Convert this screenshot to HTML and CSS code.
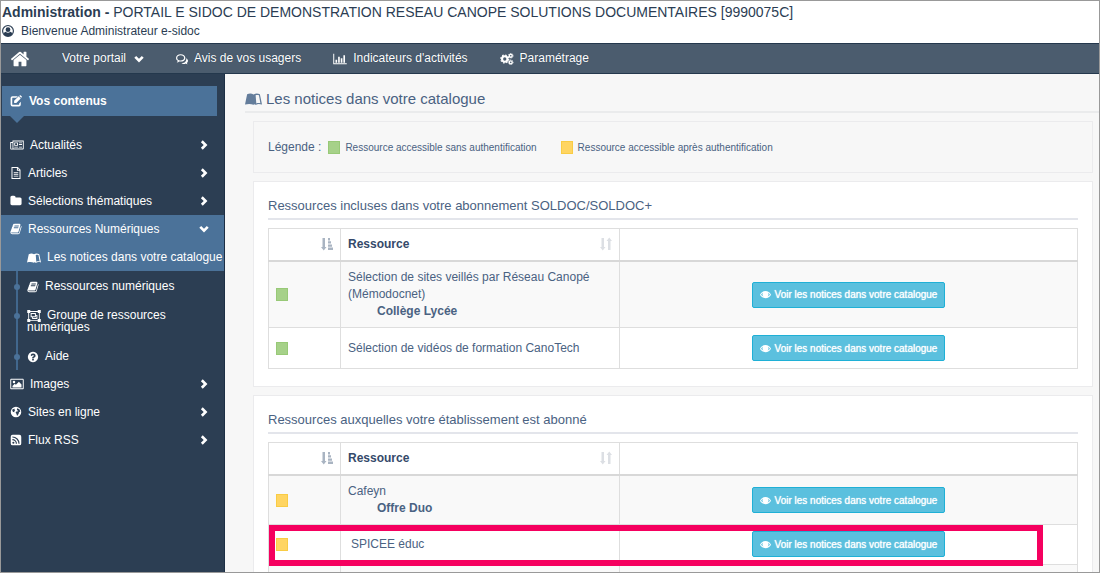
FILE: index.html
```html
<!DOCTYPE html>
<html lang="fr">

<head>
  <meta charset="UTF-8">
  <title>Administration - e-sidoc</title>
  <link rel="stylesheet" href="styles.css">
</head>

<body>
  <!-- icônes -->
  <svg class="sprite" aria-hidden="true">
    <symbol id="i-user" viewBox="0 0 16 16"><path fill-rule="evenodd" d="M8 0a8 8 0 1 0 0 16A8 8 0 0 0 8 0zm0 1.500a6.500 6.500 0 0 1 5.500 10c-.4-1.500-1.300-2.500-2.500-2.500a4 4 0 0 1-6 0c-1.200 0-2.100 1-2.500 2.500A6.500 6.500 0 0 1 8 1.500zM8 3a3.200 3.200 0 1 0 0 6.400A3.200 3.200 0 0 0 8 3z"/></symbol>
    <symbol id="i-home" viewBox="0 0 1792 1792"><path d="M1472 992v480q0 26-19 45t-45 19h-384v-384h-256v384h-384q-26 0-45-19t-19-45v-480q0-1 .5-3t.5-3l575-474 575 474q1 2 1 6zm223-69l-62 74q-8 9-21 11h-3q-13 0-21-7l-692-577-692 577q-12 8-24 7-13-2-21-11l-62-74q-8-10-7-23.500t11-21.500l719-599q32-26 76-26t76 26l244 204v-195q0-14 9-23t23-9h192q14 0 23 9t9 23v408l219 182q10 8 11 21.500t-7 23.500z"/></symbol>
    <symbol id="i-chevron" viewBox="0 0 16 16"><path d="M3.500 3L8 7.500 12.500 3 15.500 6 8 13.500.5 6z"/></symbol>
    <symbol id="i-comments" viewBox="0 0 16 16"><path d="M10.500 14.800c-1.300 0-2.300-.3-3.300-.9 4.600-.2 7.200-3.200 6.300-6.800C15 8 16 9.300 16 10.500c0 1.100-.6 2-1.500 2.700.2.800.6 1.200 1.100 1.700-1.200 0-2-.4-2.700-.9-.7.500-1.500.8-2.400.8z"/><path fill-rule="evenodd" d="M6.200 1.500C2.800 1.500 0 3.700 0 6.500c0 1.600.9 3 2.300 3.900-.2.900-.6 1.500-1.300 2.200 1.400-.1 2.500-.6 3.300-1.300 4.500.8 8.200-1.500 8.200-4.800 0-2.800-2.800-5-6.300-5zm0 1.600c2.600 0 4.600 1.500 4.600 3.400S8.800 9.900 6.200 9.900c-.8 0-1.500-.1-2.100-.3C2.700 9 1.600 7.900 1.600 6.500c0-1.900 2-3.400 4.600-3.400z"/></symbol>
    <symbol id="i-chart" viewBox="0 0 18 16"><path d="M0 1h1.300v12.700H18V15H0zM3 9h2.200v4H3zM6.500 5h2.200v8H6.500zM10 7h2.200v6H10zM13.500 3h2.200v10h-2.200z"/></symbol>
    <symbol id="i-cogs" viewBox="0 0 18 16"><g fill="none" stroke="currentColor"><circle cx="6" cy="8" r="3.600" stroke-width="2.800"/><circle cx="6" cy="8" r="5.300" stroke-width="1.600" stroke-dasharray="2.080 2.080"/><circle cx="14" cy="3.600" r="2" stroke-width="1.800"/><circle cx="14" cy="3.600" r="3.200" stroke-width="1" stroke-dasharray="1.250 1.250"/><circle cx="14" cy="12.400" r="2" stroke-width="1.800"/><circle cx="14" cy="12.400" r="3.200" stroke-width="1" stroke-dasharray="1.250 1.250"/></g></symbol>
    <symbol id="i-edit" viewBox="0 0 16 16"><path d="M10.500 1.500H3.300A2.500 2.500 0 0 0 .8 4v8.800a2.500 2.500 0 0 0 2.500 2.500h8.600a2.500 2.500 0 0 0 2.500-2.500V9l-2.200 2.200v1.300a.6.6 0 0 1-.6.6H3.600a.6.6 0 0 1-.6-.6V4.300c0-.3.3-.6.600-.6h4.700z"/><path d="M5.500 7.800L11.500 1.800l2.800 2.800-6 6H5.500zM12.300 1.200l.7-.7c.4-.4 1-.4 1.300 0l1.300 1.300c.4.4.4 1 0 1.300l-.7.700z"/></symbol>
    <symbol id="i-news" viewBox="0 0 18 16"><path fill-rule="evenodd" d="M3 2h15v10.500c0 1-.7 1.500-1.500 1.500h-15C.6 14 0 13.400 0 12.500V4h3zm1.200 1.200v9.600h12.600V3.200zM1.200 5.200v7.300c0 .7 1.800.7 1.800 0V5.200zM5.300 4.500h5v4.500h-5zm1.200 1.200v2.200h2.600V5.700zM11.500 4.500h4.200v1.200h-4.200zm0 2.200h4.200v1.200h-4.200zm-6.200 3.500h5v1.200h-5zm6.200 0h4.200v1.200h-4.200z"/></symbol>
    <symbol id="i-file" viewBox="0 0 16 16"><path fill-rule="evenodd" d="M2 0h8.500L14 3.500V16H2zm1.300 1.300v13.400h9.400V5H9.200V1.300zm7.200.3v2.100h2zM5 6.500h6v1.200H5zm0 2.500h6v1.200H5zm0 2.500h6v1.200H5z"/></symbol>
    <symbol id="i-folder" viewBox="0 0 1792 1792"><path d="M1728 608v704q0 92-66 158t-158 66h-1216q-92 0-158-66t-66-158v-960q0-92 66-158t158-66h320q92 0 158 66t66 158v32h672q92 0 158 66t66 158z"/></symbol>
    <symbol id="i-book" viewBox="0 0 1792 1792"><path d="M1703 478q40 57 18 129l-275 906q-19 64-76.500 107.500t-122.500 43.500h-923q-77 0-148.500-53.500t-99.500-131.500q-24-67-2-127 0-4 3-27t4-37q1-8-3-21.500t-3-19.500q2-11 8-21t16.500-23.500 16.500-23.500q23-38 45-91.500t30-91.500q3-10 .5-30t-.5-28q3-11 17-28t17-23q21-36 42-92t25-90q1-9-2.500-32t.5-28q4-13 22-30.500t22-22.500q19-26 42.500-84.500t27.500-96.500q1-8-3-25.500t-2-26.500q2-8 9-18t18-23 17-21q8-12 16.500-30.500t15-35 16-36 19.500-32 26.500-23.500 36-11.500 47.500 5.500l-1 3q38-9 51-9h761q74 0 114 56t18 130l-274 906q-36 119-71.500 153.500t-128.500 34.500h-869q-27 0-38 15-11 16-1 43 24 70 144 70h923q29 0 56-15.500t35-41.500l300-987q7-22 5-57 38 15 59 43zm-1064 2q-4 13 2 22.500t20 9.500h608q13 0 25.500-9.500t16.500-22.500l21-64q4-13-2-22.500t-20-9.500h-608q-13 0-25.500 9.500t-16.500 22.500zm-83 256q-4 13 2 22.500t20 9.500h608q13 0 25.500-9.500t16.500-22.500l21-64q4-13-2-22.500t-20-9.500h-608q-13 0-25.500 9.500t-16.500 22.500z"/></symbol>
    <symbol id="i-leanpub" viewBox="0 0 20 14"><path fill-rule="evenodd" d="M2.500 1.500C5 .3 8 .3 10 1.800c2-1.500 5-1.500 7.500-.3L20 13.500c-3-.9-5-1-7 .3h-.6c-1-.9-1.500-1-2.400 0-2.800-1.200-6.500-1.300-10-.3zM12.500 2.600l.8 9.600c1.500-.6 3-.7 4.800-.3l-1.700-9.200c-1.500-.6-2.800-.5-3.900-.1z"/></symbol>
    <symbol id="i-group" viewBox="0 0 18 16"><path fill-rule="evenodd" d="M0 0h4v1.300h10V0h4v4h-1.300v8H18v4h-4v-1.300H4V16H0v-4h1.300V4H0zm4 2.500V4H2.500v8H4v1.500h10V12h1.500V4H14V2.500zM4.500 4h7v2.500h2V12h-7V9.500h-2zm1.300 1.300v2.900h4.400V5.300zm5.700 2.500v1.700H7.800v1.200h4.400V7.800z"/></symbol>
    <symbol id="i-help" viewBox="0 0 1792 1792"><path d="M1024 1376v-192q0-14-9-23t-23-9h-192q-14 0-23 9t-9 23v192q0 14 9 23t23 9h192q14 0 23-9t9-23zm256-672q0-88-55.500-163t-138.500-116-170-41q-243 0-371 213-15 24 8 42l132 100q7 6 19 6 16 0 25-12 53-68 86-92 34-24 86-24 48 0 85.500 26t37.500 59q0 38-20 61t-68 45q-63 28-115.500 86.500t-52.500 125.500v36q0 14 9 23t23 9h192q14 0 23-9t9-23q0-19 21.500-49.500t54.500-49.500q32-18 49-28.500t46-35 44.500-48 28-60.500 12.500-81zm384 192q0 209-103 385.500t-279.500 279.500-385.500 103-385.500-103-279.500-279.500-103-385.500 103-385.500 279.500-279.500 385.500-103 385.500 103 279.500 279.500 103 385.500z"/></symbol>
    <symbol id="i-image" viewBox="0 0 18 16"><path fill-rule="evenodd" d="M1.500 1h15c.8 0 1.500.7 1.500 1.500v11c0 .8-.7 1.500-1.500 1.500h-15C.7 15 0 14.300 0 13.500v-11C0 1.700.7 1 1.500 1zm-.2 1.300v11.400h15.400V2.300zM3 12.500v-2l3-3 1.500 1.500 4-4L15 8.500v4zM5 3.600A1.700 1.700 0 1 1 5 7a1.700 1.700 0 0 1 0-3.400z"/></symbol>
    <symbol id="i-globe" viewBox="0 0 16 16"><path fill-rule="evenodd" d="M8 1a7 7 0 1 0 0 14A7 7 0 0 0 8 1zM3.200 4.600C4.500 4 5.500 3.500 6.500 3.700l-.6 1.500 1 .7-1.300 1.500.4 1-1.700-.4c-.9-.6-1.500-1.900-1.100-3.400zM9.500 3l3 1.200 1.200 3-1.700 1-.6 2.500-2 2.500-.8-3L7.400 9l1.100-1.600L11 7 9.200 5z"/></symbol>
    <symbol id="i-rss" viewBox="0 0 16 16"><path fill-rule="evenodd" d="M3.500 1h9A2.500 2.500 0 0 1 15 3.500v9a2.500 2.500 0 0 1-2.500 2.500h-9A2.500 2.500 0 0 1 1 12.500v-9A2.500 2.500 0 0 1 3.500 1zM4.500 10.200a1.400 1.400 0 1 0 0 2.800 1.400 1.400 0 0 0 0-2.800zM3.200 6.800v1.500a4.700 4.700 0 0 1 4.600 4.700h1.500a6.100 6.100 0 0 0-6.100-6.200zm0-3.500v1.500A8.200 8.200 0 0 1 11.300 13h1.500a9.600 9.600 0 0 0-9.600-9.700z"/></symbol>
    <symbol id="i-eye" viewBox="0 0 16 16"><path fill-rule="evenodd" d="M8 3C4.500 3 1.700 5 0 8.200c1.700 3.100 4.500 5.100 8 5.100s6.300-2 8-5.100C14.300 5 11.500 3 8 3zM4.600 5.200a4.200 4.200 0 0 0 .4 5.600c-1.400-.5-2.600-1.400-3.500-2.600.8-1.300 1.800-2.300 3.100-3zm6.800 0c1.300.7 2.300 1.700 3.100 3-.9 1.200-2.100 2.100-3.500 2.600a4.200 4.200 0 0 0 .4-5.600z"/></symbol>
    <symbol id="i-sort-asc" viewBox="0 0 12 14"><path d="M1.500 1h2.500v9h1.500L2.750 13.500 0 10h1.500zM7 1h2v2.500H7zm0 3.200h3v2.400H7zm0 3.200h4v2.400H7zm0 3.200h5V13H7z"/></symbol>
    <symbol id="i-sort" viewBox="0 0 12 14"><path d="M1.500 1h2.500v9h1.500L2.750 13.500 0 10h1.500zM8 13h2.500V4H12L9.250.5 6.500 4H8z"/></symbol>
  </svg>

  <div class="page">
    <header class="header">
      <h1 class="header-title"><strong>Administration - </strong>PORTAIL E SIDOC DE DEMONSTRATION RESEAU CANOPE SOLUTIONS DOCUMENTAIRES [9990075C]</h1>
      <p class="header-user"><svg class="icon"><use href="#i-user"/></svg>Bienvenue Administrateur e-sidoc</p>
    </header>

    <nav class="nav">
      <a class="nav-home" href="#" aria-label="Accueil"><svg class="icon icon-home"><use href="#i-home"/></svg></a>
      <a class="nav-portal" href="#">Votre portail<svg class="icon icon-small"><use href="#i-chevron"/></svg></a>
      <a href="#"><svg class="icon"><use href="#i-comments"/></svg>Avis de vos usagers</a>
      <a href="#"><svg class="icon icon-wide"><use href="#i-chart"/></svg>Indicateurs d'activités</a>
      <a href="#"><svg class="icon icon-wide"><use href="#i-cogs"/></svg>Paramétrage</a>
    </nav>

    <div class="layout">
      <aside class="sidebar">
        <h2 class="sidebar-title"><svg class="icon"><use href="#i-edit"/></svg>Vos contenus</h2>
        <ul class="menu">
          <li><a class="menu-link" href="#"><svg class="icon icon-wide"><use href="#i-news"/></svg>Actualités<svg class="icon icon-small arrow"><use href="#i-chevron"/></svg></a></li>
          <li><a class="menu-link" href="#"><svg class="icon"><use href="#i-file"/></svg>Articles<svg class="icon icon-small arrow"><use href="#i-chevron"/></svg></a></li>
          <li><a class="menu-link" href="#"><svg class="icon"><use href="#i-folder"/></svg>Sélections thématiques<svg class="icon icon-small arrow"><use href="#i-chevron"/></svg></a></li>
          <li>
            <a class="menu-link active" href="#"><svg class="icon"><use href="#i-book"/></svg>Ressources Numériques<svg class="icon icon-small arrow open"><use href="#i-chevron"/></svg></a>
            <ul class="submenu">
              <li class="active"><a href="#"><svg class="icon icon-wide"><use href="#i-leanpub"/></svg>Les notices dans votre catalogue</a></li>
              <li><a href="#"><svg class="icon"><use href="#i-book"/></svg>Ressources numériques</a></li>
              <li><a href="#"><svg class="icon icon-wide"><use href="#i-group"/></svg>Groupe de ressources numériques</a></li>
              <li><a href="#"><svg class="icon"><use href="#i-help"/></svg>Aide</a></li>
            </ul>
          </li>
          <li><a class="menu-link" href="#"><svg class="icon icon-wide"><use href="#i-image"/></svg>Images<svg class="icon icon-small arrow"><use href="#i-chevron"/></svg></a></li>
          <li><a class="menu-link" href="#"><svg class="icon"><use href="#i-globe"/></svg>Sites en ligne<svg class="icon icon-small arrow"><use href="#i-chevron"/></svg></a></li>
          <li><a class="menu-link" href="#"><svg class="icon"><use href="#i-rss"/></svg>Flux RSS<svg class="icon icon-small arrow"><use href="#i-chevron"/></svg></a></li>
        </ul>
      </aside>

      <main class="main">
        <h2 class="main-title"><svg class="icon icon-title"><use href="#i-leanpub"/></svg>Les notices dans votre catalogue</h2>

        <!-- légende des couleurs -->
        <div class="panel legend">
          <span class="legend-label">Légende :</span>
          <span class="legend-item"><i class="square green"></i>Ressource accessible sans authentification</span>
          <span class="legend-item"><i class="square yellow"></i>Ressource accessible après authentification</span>
        </div>

        <section class="panel">
          <h3 class="panel-title">Ressources incluses dans votre abonnement SOLDOC/SOLDOC+</h3>
          <table class="table">
            <thead>
              <tr>
                <th class="col-access"><svg class="icon sort sorted"><use href="#i-sort-asc"/></svg></th>
                <th class="col-name"><svg class="icon sort"><use href="#i-sort"/></svg>Ressource</th>
                <th></th>
              </tr>
            </thead>
            <tbody>
              <tr>
                <td><i class="square green"></i></td>
                <td>Sélection de sites veillés par Réseau Canopé (Mémodocnet)<strong class="offer">Collège Lycée</strong></td>
                <td class="action"><button class="btn" type="button"><svg class="icon icon-eye"><use href="#i-eye"/></svg>Voir les notices dans votre catalogue</button></td>
              </tr>
              <tr>
                <td><i class="square green"></i></td>
                <td>Sélection de vidéos de formation CanoTech</td>
                <td class="action"><button class="btn" type="button"><svg class="icon icon-eye"><use href="#i-eye"/></svg>Voir les notices dans votre catalogue</button></td>
              </tr>
            </tbody>
          </table>
        </section>

        <section class="panel">
          <h3 class="panel-title">Ressources auxquelles votre établissement est abonné</h3>
          <table class="table">
            <thead>
              <tr>
                <th class="col-access"><svg class="icon sort sorted"><use href="#i-sort-asc"/></svg></th>
                <th class="col-name"><svg class="icon sort"><use href="#i-sort"/></svg>Ressource</th>
                <th></th>
              </tr>
            </thead>
            <tbody>
              <tr>
                <td><i class="square yellow"></i></td>
                <td>Cafeyn<strong class="offer">Offre Duo</strong></td>
                <td class="action"><button class="btn" type="button"><svg class="icon icon-eye"><use href="#i-eye"/></svg>Voir les notices dans votre catalogue</button></td>
              </tr>
              <tr class="framed">
                <td><i class="square yellow"></i></td>
                <td>SPICEE éduc</td>
                <td class="action"><button class="btn" type="button"><svg class="icon icon-eye"><use href="#i-eye"/></svg>Voir les notices dans votre catalogue</button><span class="frame"></span></td>
              </tr>
              <tr>
                <td></td>
                <td>&nbsp;</td>
                <td></td>
              </tr>
            </tbody>
          </table>
        </section>
      </main>
    </div>
  </div>
</body>

</html>
```
FILE: styles.css
```css
* {
  margin: 0;
  padding: 0;
  box-sizing: border-box;
}
body {
  font-family: "Liberation Sans", Arial, sans-serif;
  font-size: 12px;
  line-height: 17px;
  color: #4a6282;
}
a {
  color: inherit;
  text-decoration: none;
}
ul {
  list-style: none;
}
.sprite {
  display: none;
}
.icon {
  width: 12px;
  height: 12px;
  flex: none;
  fill: currentColor;
}
.icon-wide {
  width: 14px;
}
.icon-small {
  width: 10px;
  height: 10px;
}
.page {
  display: flex;
  flex-direction: column;
  height: 100vh;
  overflow: hidden;
  border: 1px solid #999;
}

/* en-tête */
.header {
  padding: 1px 1px 3px;
  background: #fff;
  color: #2b3d53;
}
.header-title {
  font-size: 14px;
  font-weight: 400;
  line-height: 20px;
}
.header-user {
  display: flex;
  align-items: center;
  gap: 7px;
  line-height: 18px;
}

/* barre de navigation */
.nav {
  display: flex;
  align-items: center;
  gap: 32px;
  height: 31px;
  flex: none;
  padding: 0 9px;
  background: #4b5c6e;
  border-top: 1px solid #24384d;
  border-bottom: 1px solid #24384d;
  color: #fff;
  text-shadow: 0 0 1px #24384d;
}
.nav a {
  display: flex;
  align-items: center;
  gap: 6px;
}
.nav .nav-portal {
  gap: 8px;
}
.icon-home {
  width: 20px;
  height: 20px;
}

.layout {
  display: flex;
  flex: 1;
  min-height: 0;
}

/* menu de gauche */
.sidebar {
  width: 224px;
  flex: none;
  padding-top: 12px;
  background: #2c3e53;
  border-right: 1px solid #1d2f45;
  color: #fff;
}
.sidebar-title {
  position: relative;
  display: flex;
  align-items: center;
  gap: 7px;
  height: 30px;
  margin: 0 7px 15px 1px;
  padding-left: 8px;
  background: #4b7299;
  font-size: 12px;
}
.sidebar-title::after {
  content: "";
  position: absolute;
  top: 100%;
  left: 8px;
  border: 7px solid transparent;
  border-top-color: #4b7299;
  border-bottom: 0;
}
.menu-link {
  display: flex;
  align-items: center;
  gap: 6px;
  height: 28px;
  padding: 0 15px 0 9px;
}
.arrow {
  margin-left: auto;
  transform: rotate(-90deg);
}
.arrow.open {
  transform: none;
}
.active {
  background: #4b7299;
}
.submenu {
  background: linear-gradient(#41678d, #41678d) 15px 0 / 2px 100% no-repeat;
}
.submenu li {
  position: relative;
  padding: 9px 8px 8px 26px;
  line-height: 12px;
}
.submenu .active {
  padding: 8px 0 8px 26px;
}
.submenu .icon {
  margin: -3px 6px -3px 0;
  vertical-align: middle;
}
.submenu li:not(.active)::before {
  content: "";
  position: absolute;
  top: 13px;
  left: 13px;
  width: 6px;
  height: 6px;
  border-radius: 50%;
  background: #4b7299;
}

/* contenu */
.main {
  flex: 1;
  min-width: 0;
  padding: 12px 0 0 20px;
  background: #f7f7f7;
}
.main-title {
  display: flex;
  align-items: center;
  gap: 4px;
  height: 27px;
  margin-bottom: 8px;
  border-bottom: 2px solid #eaebec;
  font-size: 15px;
  font-weight: 400;
}
.icon-title {
  width: 17px;
  height: 12px;
  color: #647d9b;
}
.panel {
  margin: 0 6px 8px 8px;
  padding: 15px 14px 17px;
  background: #fff;
  border: 1px solid #ebebed;
}
.legend {
  display: flex;
  align-items: center;
  padding: 17px 14px 16px;
  background: #f7f7f7;
}
.legend-label {
  margin-right: 7px;
}
.legend-item {
  display: flex;
  align-items: center;
  gap: 5px;
  margin-right: 24px;
  font-size: 10px;
}
.square {
  display: block;
  width: 12px;
  height: 13px;
}
.green {
  background: #a6d189;
  border: 1px solid #98c977;
}
.yellow {
  background: #ffd562;
  border: 1px solid #f9cc45;
}
.panel-title {
  margin-bottom: 8px;
  padding-bottom: 3px;
  border-bottom: 2px solid #e3e5eb;
  font-size: 13px;
  font-weight: 400;
  line-height: 18px;
}

/* tableaux */
.table {
  width: 100%;
  table-layout: fixed;
  border-collapse: collapse;
}
.table th,
.table td {
  padding: 7px;
  border: 1px solid #dedede;
  text-align: left;
}
.table th {
  border-bottom: 2px solid #d8d8d8;
  color: #34496a;
  vertical-align: top;
}
.table tbody tr:nth-child(odd) {
  background: #f9f9f9;
}
.col-access {
  width: 72px;
}
.col-name {
  width: 279px;
}
.sort {
  float: right;
  height: 14px;
  margin-top: 1px;
  color: #dcdfe4;
}
.sorted {
  color: #a9b4c2;
}
.offer {
  display: block;
  padding-left: 29px;
}
.table .action {
  text-align: center;
}
.btn {
  display: inline-flex;
  align-items: center;
  gap: 4px;
  height: 26px;
  padding: 0 7px;
  background: #5bc0de;
  border: 1px solid #1fb0d6;
  border-radius: 2px;
  color: #fff;
  font: 10px "Liberation Sans", Arial, sans-serif;
  text-shadow: 0 0 1px #fff;
  vertical-align: top;
}
.icon-eye {
  width: 11px;
  height: 11px;
}

/* cadre rose qui entoure toute la ligne */
.framed {
  position: relative;
}
.table .framed td {
  padding-top: 6px;
}
.table .framed td:nth-child(2) {
  padding-left: 10px;
}
.frame {
  position: absolute;
  top: 0;
  right: 35px;
  bottom: -1px;
  left: 0;
  border: 6px solid #f5005f;
  pointer-events: none;
}
```
